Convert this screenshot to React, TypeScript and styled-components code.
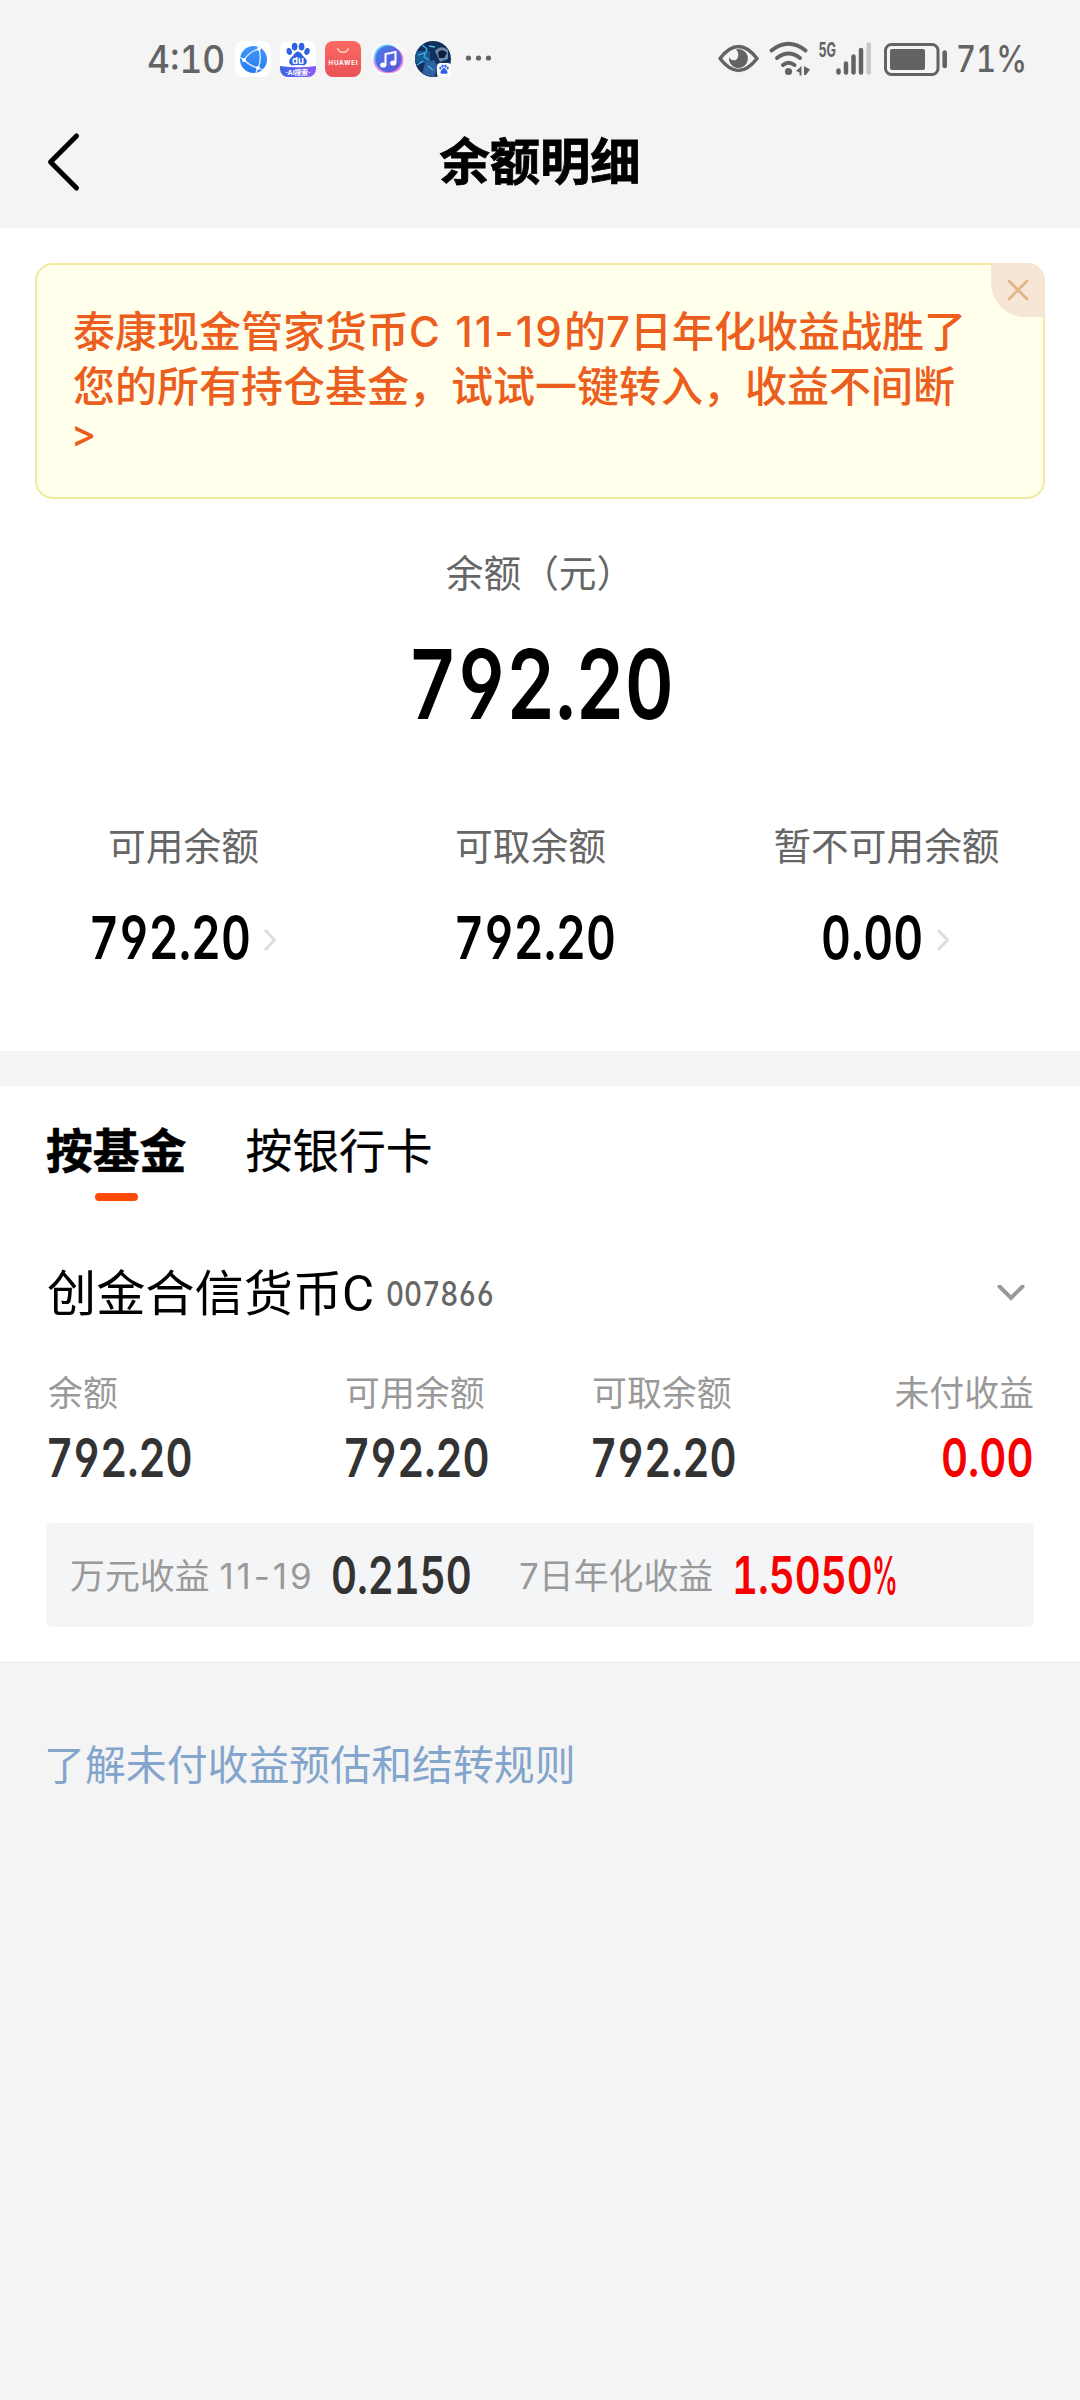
import React from "react";
import styled, { createGlobalStyle } from "styled-components";

const Global = createGlobalStyle`
  * { box-sizing: border-box; }
  body { margin: 0; background: #f4f4f4; }
`;

const Page = styled.div`
  width: 1080px;
  height: 2400px;
  overflow: hidden;
  background: #f4f4f4;
  color: #000;
  font-family: "Inter", "Noto Sans CJK SC", sans-serif;
`;

const StatusBar = styled.div`
  height: 100px;
  padding: 18px 56px 0 148px;
  display: flex;
  align-items: center;
  justify-content: space-between;
  color: #636363;
`;

const StatusGroup = styled.div<{ $gap: number }>`
  display: flex;
  align-items: center;
  gap: ${(p) => p.$gap}px;
`;

const Header = styled.header`
  height: 128px;
  padding: 0 46px;
  display: grid;
  grid-template-columns: 60px 1fr 60px;
  align-items: center;
  padding-bottom: 5px;
`;

const Title = styled.h1`
  margin: 0;
  text-align: center;
  font-size: 50.3px;
  line-height: 60px;
  font-weight: 700;
  -webkit-text-stroke: 0.8px #000;
`;

const NumBox = styled.span<{ $w: number; $h: number }>`
  display: inline-block;
  flex: none;
  width: ${(p) => p.$w}px;
  height: ${(p) => p.$h}px;
`;

const NumText = styled.span<{ $size: number; $h: number; $scale: number; $weight: number; $color: string }>`
  display: inline-block;
  white-space: nowrap;
  font-family: "Inter", sans-serif;
  font-feature-settings: "cv03", "cv04", "tnum";
  font-size: ${(p) => p.$size}px;
  line-height: ${(p) => p.$h}px;
  font-weight: ${(p) => p.$weight};
  color: ${(p) => p.$color};
  margin-left: -0.03em;
  transform: scaleX(${(p) => p.$scale});
  transform-origin: 0 50%;
`;

type NumProps = { children: string; w: number; h: number; size: number; scale?: number; weight?: number; color?: string };
const Num = ({ children, w, h, size, scale = 0.79, weight = 600, color = "#000" }: NumProps) => (
  <NumBox $w={w} $h={h}>
    <NumText $size={size} $h={h} $scale={scale} $weight={weight} $color={color}>
      {children}
    </NumText>
  </NumBox>
);

const Summary = styled.section`
  height: 823px;
  padding-top: 35px;
  background: #fff;
  display: flex;
  flex-direction: column;
  align-items: center;
`;

const Banner = styled.div`
  position: relative;
  width: 1010px;
  height: 236px;
  padding: 39px 70px 0 36px;
  border: 2px solid #f3eaa2;
  border-radius: 18px;
  background: #ffffec;
  color: #ec5e1e;
  font-size: 42px;
  line-height: 55px;
  font-weight: 500;
`;

const Latin = styled.span<{ $spacing: number }>`
  letter-spacing: ${(p) => p.$spacing}px;
`;

const BannerArrow = styled.span`
  font-size: 38px;
  line-height: 1;
  vertical-align: 10px;
  margin-left: -2px;
`;

const BannerClose = styled.button`
  position: absolute;
  top: -2px;
  right: -2px;
  width: 54px;
  height: 54px;
  padding: 0;
  border: 0;
  border-radius: 0 18px 0 34px;
  background: #f7e5d5;
  display: flex;
  align-items: center;
  justify-content: center;
`;

const BalanceLabel = styled.div`
  margin-top: 49px;
  font-size: 37.7px;
  line-height: 50px;
  color: #666;
`;

const BigValue = styled.div`
  margin-top: 36px;
  display: flex;
`;

const Split = styled.div`
  width: 100%;
  margin-top: 87px;
  padding: 0 17px 0 8px;
  display: grid;
  grid-template-columns: 351px 351px 1fr;
`;

const SplitItem = styled.div`
  display: flex;
  flex-direction: column;
  align-items: center;
  gap: 37px;
`;

const SplitLabel = styled.div<{ $nudge?: number }>`
  font-size: 37.7px;
  line-height: 50px;
  color: #666;
  margin-right: ${(p) => p.$nudge ?? 0}px;
`;

const SplitValue = styled.div`
  display: flex;
  align-items: center;
  gap: 14px;
  svg { margin-top: 3px; }
`;

const Funds = styled.section`
  margin-top: 35px;
  height: 577px;
  padding: 35px 46px 0;
  background: #fff;
  border-bottom: 1px solid #e8e8e8;
`;

const Tabs = styled.nav`
  display: flex;
  gap: 59px;
`;

const Tab = styled.div<{ $active?: boolean }>`
  display: flex;
  flex-direction: column;
  align-items: center;
  gap: 12px;
  font-size: 46.8px;
  line-height: 60px;
  font-weight: ${(p) => (p.$active ? 700 : 400)};
  -webkit-text-stroke: ${(p) => (p.$active ? 0.6 : 0.2)}px #000;
  &::after {
    content: "";
    width: 43px;
    height: 8px;
    border-radius: 4px;
    background: ${(p) => (p.$active ? "#fd4a03" : "transparent")};
  }
`;

const FundHead = styled.div`
  margin-top: 63px;
  height: 60px;
  display: flex;
  align-items: center;
  padding: 0 9px 0 1px;
`;

const FundName = styled.div`
  font-family: "Roboto", "Noto Sans CJK SC", sans-serif;
  font-size: 49.2px;
  line-height: 60px;
  margin-right: 13px;
`;

const Spacer = styled.div`
  flex: 1;
`;

const Stats = styled.div`
  margin-top: 44px;
  display: grid;
  grid-template-columns: 297px 247px 1fr auto;
  padding-left: 2px;
`;

const Stat = styled.div<{ $end?: boolean }>`
  display: flex;
  flex-direction: column;
  align-items: ${(p) => (p.$end ? "flex-end" : "flex-start")};
  gap: 10px;
  font-size: 34.9px;
  line-height: 50px;
  color: #999;
`;

const YieldBar = styled.div`
  margin-top: 35px;
  height: 104px;
  padding: 0 24px;
  border-radius: 6px;
  background: #f4f5f7;
  display: flex;
  align-items: center;
  font-size: 34.9px;
  color: #999;
`;

const YieldLabel = styled.span<{ $w: number }>`
  width: ${(p) => p.$w}px;
  flex: none;
  white-space: nowrap;
  line-height: 50px;
  padding-top: 2px;
`;

const RuleLink = styled.a`
  display: block;
  margin: 72px 44px 0;
  font-size: 40.9px;
  line-height: 60px;
  color: #83a5cc;
`;

const Chevron = () => (
  <svg width="14" height="24" viewBox="0 0 14 24" fill="none">
    <path d="M2 2 L11.5 12 L2 22" stroke="#dcdcdc" strokeWidth="3" strokeLinejoin="round" />
  </svg>
);

const Paw = ({ x, y, s }: { x: number; y: number; s: number }) => (
  <g transform={`translate(${x} ${y}) scale(${s})`} fill="#2f62df">
    <ellipse cx="-8.6" cy="-1" rx="2.6" ry="3.5" transform="rotate(-15 -8.6 -1)" />
    <ellipse cx="-3.3" cy="-5.8" rx="2.8" ry="3.8" />
    <ellipse cx="3.5" cy="-5.8" rx="2.8" ry="3.8" />
    <ellipse cx="8.8" cy="-1" rx="2.6" ry="3.5" transform="rotate(15 8.8 -1)" />
    <path d="M0 -1 C3 -1 4 3 7 5.4 C10 8.2 8.5 13 4.5 12.6 C2 12.2 -2 12.2 -4.5 12.6 C-8.5 13 -10 8.2 -7 5.4 C-4 3 -3 -1 0 -1Z" />
  </g>
);

const AppIcons = () => (
  <svg width="258" height="36" viewBox="0 0 258 36">
    <defs>
      <linearGradient id="globe" x1="0" y1="0" x2="0" y2="1">
        <stop offset="0" stopColor="#3f97fb" />
        <stop offset="1" stopColor="#2b7bf0" />
      </linearGradient>
      <linearGradient id="banner" x1="0" x2="1">
        <stop offset="0" stopColor="#3d64e8" />
        <stop offset="1" stopColor="#8b5cf5" />
      </linearGradient>
      <linearGradient id="shop" x1="0" y1="0" x2="0" y2="1">
        <stop offset="0" stopColor="#fb6a62" />
        <stop offset="1" stopColor="#ea5257" />
      </linearGradient>
      <linearGradient id="music" x1="0" y1="0" x2="1" y2="1">
        <stop offset="0" stopColor="#4b7bea" />
        <stop offset="1" stopColor="#5f55dc" />
      </linearGradient>
      <clipPath id="b"><rect x="45" width="36" height="36" rx="8" /></clipPath>
      <clipPath id="g"><circle cx="18.5" cy="18.5" r="13.5" /></clipPath>
      <clipPath id="c"><circle cx="198" cy="18" r="18" /></clipPath>
    </defs>
    <rect width="36" height="36" rx="8" fill="#fff" />
    <circle cx="18.5" cy="18.5" r="13.5" fill="url(#globe)" />
    <g clipPath="url(#g)" stroke="#e4f1ff" strokeWidth="1.3" fill="none">
      <path d="M3 15 L9 19 Q15 10 24 8 Q30 4 33 6" />
      <path d="M24 8 Q27 18 23 27 M9 19 Q15 25 23 27 L31 30 M24 8 L21 3 M23 27 L20 34" />
    </g>
    <g fill="#fff"><circle cx="9" cy="19" r="2" /><circle cx="24" cy="8" r="1.7" /><circle cx="23" cy="27" r="2" /></g>
    <g clipPath="url(#b)">
      <rect x="45" width="36" height="36" fill="#fff" />
      <Paw x={63} y={11.5} s={1.02} />
      <text x="63" y="23" fontFamily="Inter" fontWeight="700" fontSize="9.5" fill="#fff" textAnchor="middle">du</text>
      <path d="M45 25 Q63 27.5 81 25 V36 H45Z" fill="url(#banner)" />
      <text x="63" y="34" fontFamily="Inter, Noto Sans CJK SC" fontWeight="700" fontSize="6.8" fill="#fff" textAnchor="middle">·AI搜索·</text>
    </g>
    <rect x="90" width="36" height="36" rx="8" fill="url(#shop)" />
    <path d="M102.5 7 A5.7 5.7 0 0 0 113.5 7" stroke="#ffd0c8" strokeWidth="1.4" fill="none" />
    <text x="108" y="23.5" fontFamily="Inter" fontWeight="700" fontSize="6.2" fill="#fff" textAnchor="middle" textLength="29">HUAWEI</text>
    <rect x="137" y="2" width="32" height="32" rx="8" fill="#f8f8fa" />
    <circle cx="151.5" cy="19" r="13" fill="#ee86dd" />
    <circle cx="152" cy="16.5" r="13" fill="#62d0f2" />
    <circle cx="155.5" cy="19" r="13" fill="#ee86dd" />
    <circle cx="153.5" cy="18" r="13.2" fill="url(#music)" />
    <path d="M150.5 24 V13 L160.5 11 V22" stroke="#fff" strokeWidth="2" fill="none" />
    <ellipse cx="148.2" cy="24" rx="3.1" ry="2.6" fill="#fff" />
    <ellipse cx="158.2" cy="22" rx="3.1" ry="2.6" fill="#fff" />
    <g clipPath="url(#c)">
      <rect x="180" width="36" height="36" fill="#12305c" />
      <path d="M180 10 H195 V22 H180Z" fill="#175a94" />
      <path d="M186 3 L192 8 L189 16 L194 19" stroke="#37a5dc" strokeWidth="1.5" fill="none" />
      <path d="M200 10 Q206 3 213 9 L213 18 L205 21 Z" fill="#6f87a8" />
      <path d="M203 11 Q208 7 212 12 L209 17 H204Z" fill="#0c1d3d" />
      <path d="M187 34 L190 22 L199 19 L203 27 L199 36Z" fill="#2e62a0" />
      <path d="M182 24 L188 20 M193 25 L198 29 M183 14 L190 12 M194 5 L200 6" stroke="#52b9e8" strokeWidth="1.3" />
    </g>
    <rect x="202" y="22" width="14" height="14" rx="3.5" fill="#fff" />
    <Paw x={209} y={27.5} s={0.42} />
    <g fill="#636363"><circle cx="233.5" cy="17" r="2.6" /><circle cx="243.5" cy="17" r="2.6" /><circle cx="253.5" cy="17" r="2.6" /></g>
  </svg>
);

const StatusIcons = () => (
  <svg width="232" height="56" viewBox="717 31 232 56" fill="none" stroke="#636363">
    <path d="M720 58.5 Q738.5 34.5 757 58.5 Q738.5 82.5 720 58.5Z" strokeWidth="3.5" strokeLinejoin="round" />
    <path d="M739 49 A9.5 9.5 0 1 1 729 57 A6 6 0 0 0 736 60 A7 7 0 0 0 736 49.5Z" fill="#636363" stroke="none" />
    <g strokeWidth="4" strokeLinecap="round">
      <path d="M771.5 50.5 Q788.5 37 805.5 50.5" />
      <path d="M777 58 Q788.5 49 800 58" />
      <path d="M783 65 Q788.5 60.5 794.5 65" />
    </g>
    <circle cx="788.5" cy="71.5" r="3.6" fill="#636363" stroke="none" />
    <path d="M796 71 L801.5 66 V75.5 H799.5 V72.5Z M804 66 L810 69.5 L806 75 H804Z" fill="#636363" stroke="none" />
    <text x="818.5" y="57" fontFamily="Inter" fontWeight="700" fontSize="20" textLength="17.5" lengthAdjust="spacingAndGlyphs" fill="#636363" stroke="none">5G</text>
    <g strokeWidth="4.5" strokeLinecap="round">
      <path d="M838.5 70.5 V72.5" />
      <path d="M846 63.5 V72.5" />
      <path d="M853.5 56.5 V72.5" />
      <path d="M861 50 V72.5" />
      <path d="M868.7 44.5 V72.5" stroke="#c8c8c8" />
    </g>
    <rect x="885.5" y="44.5" width="52.5" height="30" rx="6" strokeWidth="3" />
    <rect x="890" y="49" width="35" height="21" rx="2" fill="#636363" stroke="none" />
    <path d="M944.7 52.5 V66" strokeWidth="4.6" strokeLinecap="round" />
  </svg>
);

export default function App() {
  return (
    <Page>
      <Global />
      <StatusBar>
        <StatusGroup $gap={10}>
          <Num w={77} h={48} size={38} weight={500} scale={0.93} color="#636363">4:10</Num>
          <AppIcons />
        </StatusGroup>
        <StatusGroup $gap={8}>
          <StatusIcons />
          <Num w={67} h={49} size={36.5} weight={500} scale={0.85} color="#636363">71%</Num>
        </StatusGroup>
      </StatusBar>

      <Header>
        <svg width="36" height="62" viewBox="0 0 36 62" fill="none">
          <path d="M30.5 5 L4.5 31 L30.5 57" stroke="#000" strokeWidth="5" strokeLinecap="round" strokeLinejoin="round" />
        </svg>
        <Title>余额明细</Title>
      </Header>

      <Summary>
        <Banner>
          泰康现金管家货币<Latin $spacing={2.1}>C 11-19</Latin>的7日年化收益战胜了您的所有持仓基金，试试一键转入，收益不间断 <BannerArrow>&gt;</BannerArrow>
          <BannerClose>
            <svg width="22" height="22" viewBox="0 0 22 22">
              <path d="M2 2 L20 20 M20 2 L2 20" stroke="#e0b588" strokeWidth="2.8" strokeLinecap="round" />
            </svg>
          </BannerClose>
        </Banner>
        <BalanceLabel>余额（元）</BalanceLabel>
        <BigValue>
          <Num w={259} h={100} size={96}>792.20</Num>
        </BigValue>
        <Split>
          <SplitItem>
            <SplitLabel>可用余额</SplitLabel>
            <SplitValue><Num w={158} h={60} size={58.5}>792.20</Num><Chevron /></SplitValue>
          </SplitItem>
          <SplitItem>
            <SplitLabel $nudge={8}>可取余额</SplitLabel>
            <SplitValue><Num w={157} h={60} size={58.5}>792.20</Num></SplitValue>
          </SplitItem>
          <SplitItem>
            <SplitLabel>暂不可用余额</SplitLabel>
            <SplitValue><Num w={99} h={60} size={58.5}>0.00</Num><Chevron /></SplitValue>
          </SplitItem>
        </Split>
      </Summary>

      <Funds>
        <Tabs>
          <Tab $active>按基金</Tab>
          <Tab>按银行卡</Tab>
        </Tabs>
        <FundHead>
          <FundName>创金合信货币C</FundName>
          <Num w={108} h={54} size={34} weight={500} scale={0.82} color="#666">007866</Num>
          <Spacer />
          <svg width="28" height="18" viewBox="0 0 28 18" fill="none">
            <path d="M2.5 1.5 L14 13 L25.5 1.5" stroke="#999" strokeWidth="4" strokeLinecap="round" />
          </svg>
        </FundHead>
        <Stats>
          <Stat>余额<Num w={146} h={60} size={53} color="#333">792.20</Num></Stat>
          <Stat>可用余额<Num w={146} h={60} size={53} color="#333">792.20</Num></Stat>
          <Stat>可取余额<Num w={146} h={60} size={53} color="#333">792.20</Num></Stat>
          <Stat $end>未付收益<Num w={91} h={60} size={53} color="#f70000">0.00</Num></Stat>
        </Stats>
        <YieldBar>
          <YieldLabel $w={263}>万元收益 <Latin $spacing={3}>11-19</Latin></YieldLabel>
          <Num w={186} h={60} size={51.5} scale={0.78} color="#333">0.2150</Num>
          <YieldLabel $w={215}>7日年化收益</YieldLabel>
          <Num w={140} h={60} size={51.5} scale={0.78} color="#f70000">1.5050</Num>
          <Num w={26} h={60} size={51.5} scale={0.5} color="#f70000">%</Num>
        </YieldBar>
      </Funds>

      <RuleLink>了解未付收益预估和结转规则</RuleLink>
    </Page>
  );
}
